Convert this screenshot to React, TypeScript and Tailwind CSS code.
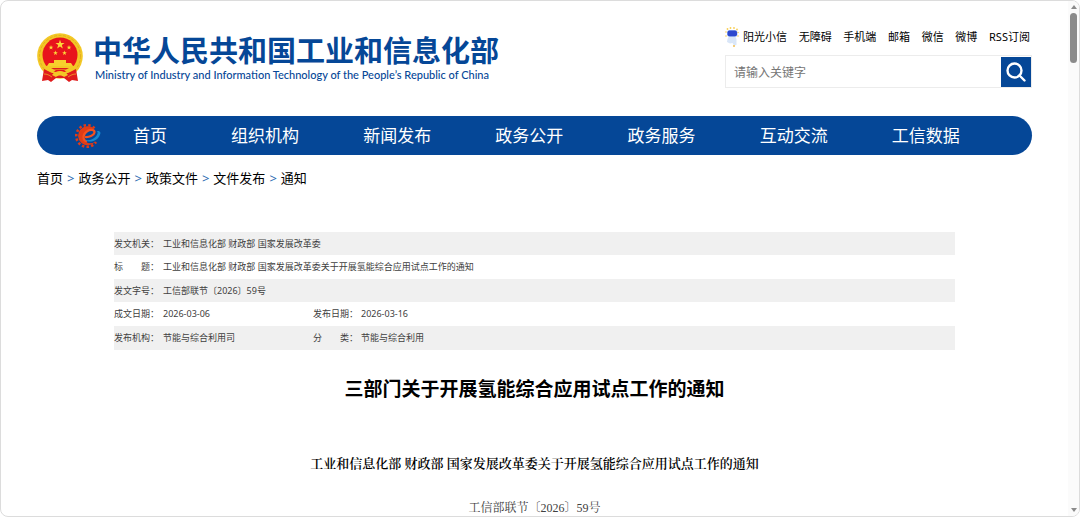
import React from "react";

const utilityLinks = ["阳光小信", "无障碍", "手机端", "邮箱", "微信", "微博", "RSS订阅"];
const sections = ["组织机构", "新闻发布", "政务公开", "政务服务", "互动交流", "工信数据"];
const crumbs = ["首页", "政务公开", "政策文件", "文件发布", "通知"];

function starPoints(cx: number, cy: number, r: number) {
  return Array.from({ length: 10 }, (_, i) => {
    const a = (Math.PI / 5) * i - Math.PI / 2;
    const d = i % 2 === 0 ? r : r * 0.4;
    return `${(cx + d * Math.cos(a)).toFixed(2)},${(cy + d * Math.sin(a)).toFixed(2)}`;
  }).join(" ");
}

function Emblem() {
  return (
    <svg viewBox="0 0 46 50" className="h-[50px] w-[46px] shrink-0" aria-hidden="true">
      <circle cx="23" cy="23" r="22.8" fill="#f3c826" />
      <circle cx="23" cy="23" r="20.5" fill="none" stroke="#e3ad20" strokeWidth="1" strokeDasharray="3 1.5" />
      <circle cx="23" cy="22" r="17.5" fill="#e8141c" />
      <path d="M7 36 5 48l6-1 3 2 5-4h8l5 4 3-2 6 1-2-12-8 4H15z" fill="#e01b1d" />
      <polygon points={starPoints(23, 11.5, 4.8)} fill="#fbd83a" />
      <polygon points={starPoints(14, 14.5, 2.5)} fill="#fbd83a" />
      <polygon points={starPoints(32, 14.5, 2.5)} fill="#fbd83a" />
      <polygon points={starPoints(18.5, 20, 2.5)} fill="#fbd83a" />
      <polygon points={starPoints(27.5, 20, 2.5)} fill="#fbd83a" />
      <path d="M17 27h12v3h5l2 3H10l2-3h5z" fill="#f7cf2c" />
      <path d="M8 33h30c0 3-4 6-8 6l-3-2h-8l-3 2c-4 0-8-3-8-6z" fill="#f3c826" />
      <path d="M14 35h18l-3 1.500H17z" fill="#e01b1d" />
      <path d="M15 42c2-3 5-4 8-4s6 1 8 4l-4 2c-2-2-6-2-8 0z" fill="#f3c826" />
      <path d="M7 41c3 0 5 1 8 3M39 41c-3 0-5 1-8 3" fill="none" stroke="#f0a826" strokeWidth="0.800" />
    </svg>
  );
}

function Mascot() {
  return (
    <svg viewBox="0 0 14 20" className="h-5 w-3.5 shrink-0" aria-hidden="true">
      <g fill="#f8cf55">
        <circle cx="2.500" cy="2" r="0.900" /><circle cx="5.500" cy="1" r="0.900" />
        <circle cx="9" cy="1" r="0.900" /><circle cx="12" cy="2.500" r="0.900" />
        <circle cx="1" cy="5" r="0.800" /><circle cx="13" cy="5.500" r="0.800" />
        <circle cx="1" cy="9" r="0.800" /><circle cx="13" cy="9" r="0.800" />
      </g>
      <path d="M4 9h6l1.500 3v6L9 18.500 7.500 16 5 16.500 2 15l.5-3z" fill="#d9e6f8" />
      <rect x="2" y="3" width="10.500" height="7" rx="3" fill="#a9c2f1" />
      <rect x="2.500" y="3.600" width="9.500" height="5.600" rx="2" fill="#2d48ce" />
      <circle cx="9" cy="19" r="0.900" fill="#f0b63e" />
    </svg>
  );
}

function GearMark() {
  return (
    <svg viewBox="0 0 26 26" className="h-[26px] w-[26px] shrink-0" aria-hidden="true">
      <path
        d="M19.500 5.200A10.800 10.800 0 1 0 21 19"
        fill="none"
        stroke="#e23a16"
        strokeWidth="2.600"
        strokeDasharray="2.400 2.200"
      />
      <path d="M19 5.500A9.600 9.600 0 1 0 20 19c-5 2.500-10 1-10.500-3C8.500 11 13 6.500 19 5.500z" fill="#e03c15" />
      <path d="M10 14c4 .5 9-1.500 9.500-4.500.3-3-4-3.500-7-1.500-5 3-5.500 9-.5 10.500" fill="none" stroke="#f4511e" strokeWidth="2.200" />
      <path d="M10.500 17c6 .8 10.500-2 12-6.500.3-1.300 0-2-1-2.500 2-.3 4 .3 4 2-1 5.500-6 9-12 8.500-1.500-.2-2.500-.7-3-1.500z" fill="#1489cf" />
    </svg>
  );
}

function Field({ label, children }: { label: React.ReactNode; children: React.ReactNode }) {
  return (
    <>
      <th scope="row" className="p-0 text-left font-normal whitespace-nowrap">{label}</th>
      <td className="p-0">{children}</td>
    </>
  );
}

export default function App() {
  return (
    <div className="flex h-screen overflow-hidden rounded-lg border border-[#dcdcdc] bg-white font-['Noto_Sans','Noto_Sans_CJK_SC',sans-serif] text-black">
      <div className="min-w-0 flex-1 overflow-hidden pr-9 pl-9">
        <header className="flex items-start justify-between pt-[26px]">
          <a href="#" className="flex items-start gap-2.5 pt-1.5 text-[#054797]">
            <Emblem />
            <span className="flex flex-col">
              <span className="text-[29px] leading-9 font-bold whitespace-nowrap">中华人民共和国工业和信息化部</span>
              <span className="pl-0.5 font-['Lato','Noto_Sans',sans-serif] text-[11px] leading-3 font-medium whitespace-nowrap">Ministry of Industry and Information Technology of the People’s Republic of China</span>
            </span>
          </a>
          <div className="flex w-[307px] flex-col">
            <nav aria-label="快捷链接" className="flex items-center justify-between pr-0.5 text-[11px] leading-5 whitespace-nowrap">
              {utilityLinks.map((name, i) => (
                <a key={name} href="#" className="flex items-center gap-1">
                  {i === 0 && <Mascot />}
                  {name}
                </a>
              ))}
            </nav>
            <form className="mt-2 flex h-[33px] items-center border border-[#ececec]">
              <input type="search" aria-label="搜索" placeholder="请输入关键字" className="h-full min-w-0 flex-1 px-2 pt-0.5 text-[12px] outline-none placeholder:text-[#757575]" />
              <button type="submit" aria-label="搜索" className="flex size-[30px] items-center justify-center bg-[#054797]">
                <svg viewBox="0 0 20 20" className="size-5" fill="none" stroke="white" strokeWidth="2.400" aria-hidden="true">
                  <circle cx="8.500" cy="8.500" r="7" />
                  <path d="m13.500 13.500 5 5" strokeLinecap="round" />
                </svg>
              </button>
            </form>
          </div>
        </header>

        <nav aria-label="主导航" className="mt-7 flex h-[39px] items-center rounded-full bg-[#054797] pr-2 pl-[38px] text-[17px] whitespace-nowrap text-white">
          <GearMark />
          <a href="#" className="ml-8 w-[98px]">首页</a>
          {sections.map((name) => (
            <a key={name} href="#" className="flex-1">{name}</a>
          ))}
        </nav>

        <nav aria-label="当前位置" className="mt-[11px] text-[13px] leading-6">
          <ol className="flex">
            {crumbs.map((name, i) => (
              <li key={name} className="flex">
                {i > 0 && <span className="px-1 text-[#2a6ab0]" aria-hidden="true">&gt;</span>}
                <a href="#">{name}</a>
              </li>
            ))}
          </ol>
        </nav>

        <main className="px-[77px] pt-[42px]">
          <table className="w-full table-fixed border-collapse text-[9px] text-[#404040]">
            <colgroup>
              <col className="w-[49px]" />
              <col className="w-[150px]" />
              <col className="w-[48px]" />
              <col />
            </colgroup>
            <tbody>
              <tr className="h-[23px] bg-[#f0f0f0]">
                <th scope="row" className="p-0 text-left font-normal">发文机关：</th>
                <td colSpan={3} className="p-0">工业和信息化部 财政部 国家发展改革委</td>
              </tr>
              <tr className="h-6">
                <th scope="row" className="p-0 text-left font-normal">标&emsp;&emsp;题：</th>
                <td colSpan={3} className="p-0">工业和信息化部 财政部 国家发展改革委关于开展氢能综合应用试点工作的通知</td>
              </tr>
              <tr className="h-[23px] bg-[#f0f0f0]">
                <th scope="row" className="p-0 text-left font-normal">发文字号：</th>
                <td colSpan={3} className="p-0">工信部联节〔2026〕59号</td>
              </tr>
              <tr className="h-6">
                <Field label="成文日期：">2026-03-06</Field>
                <Field label="发布日期：">2026-03-16</Field>
              </tr>
              <tr className="h-6 bg-[#f0f0f0]">
                <Field label="发布机构：">节能与综合利用司</Field>
                <Field label={<>分&emsp;&emsp;类：</>}>节能与综合利用</Field>
              </tr>
            </tbody>
          </table>

          <h1 className="mt-[23px] text-center text-[19px] leading-8 font-bold">三部门关于开展氢能综合应用试点工作的通知</h1>
          <div className="text-center font-['Liberation_Serif','Noto_Serif_CJK_SC','Noto_Sans_CJK_SC',serif]">
            <h2 className="mt-[49px] text-[13px] leading-5 font-semibold">工业和信息化部 财政部 国家发展改革委关于开展氢能综合应用试点工作的通知</h2>
            <p className="mt-6 text-[12px] leading-5 text-[#404040]">工信部联节〔2026〕59号</p>
          </div>
        </main>
      </div>

      <div className="flex w-[11px] shrink-0 flex-col items-center justify-between bg-[#fbfbfb] py-1" aria-hidden="true">
        <div className="flex flex-col items-center gap-1">
          <svg viewBox="0 0 6 4" className="h-1 w-1.5"><path d="M0 4h6L3 0z" fill="#8b8b8b" /></svg>
          <div className="h-[50px] w-[7px] rounded-full bg-[#8b8b8b]" />
        </div>
        <svg viewBox="0 0 6 4" className="h-1 w-1.5"><path d="M0 0h6L3 4z" fill="#8b8b8b" /></svg>
      </div>
    </div>
  );
}
